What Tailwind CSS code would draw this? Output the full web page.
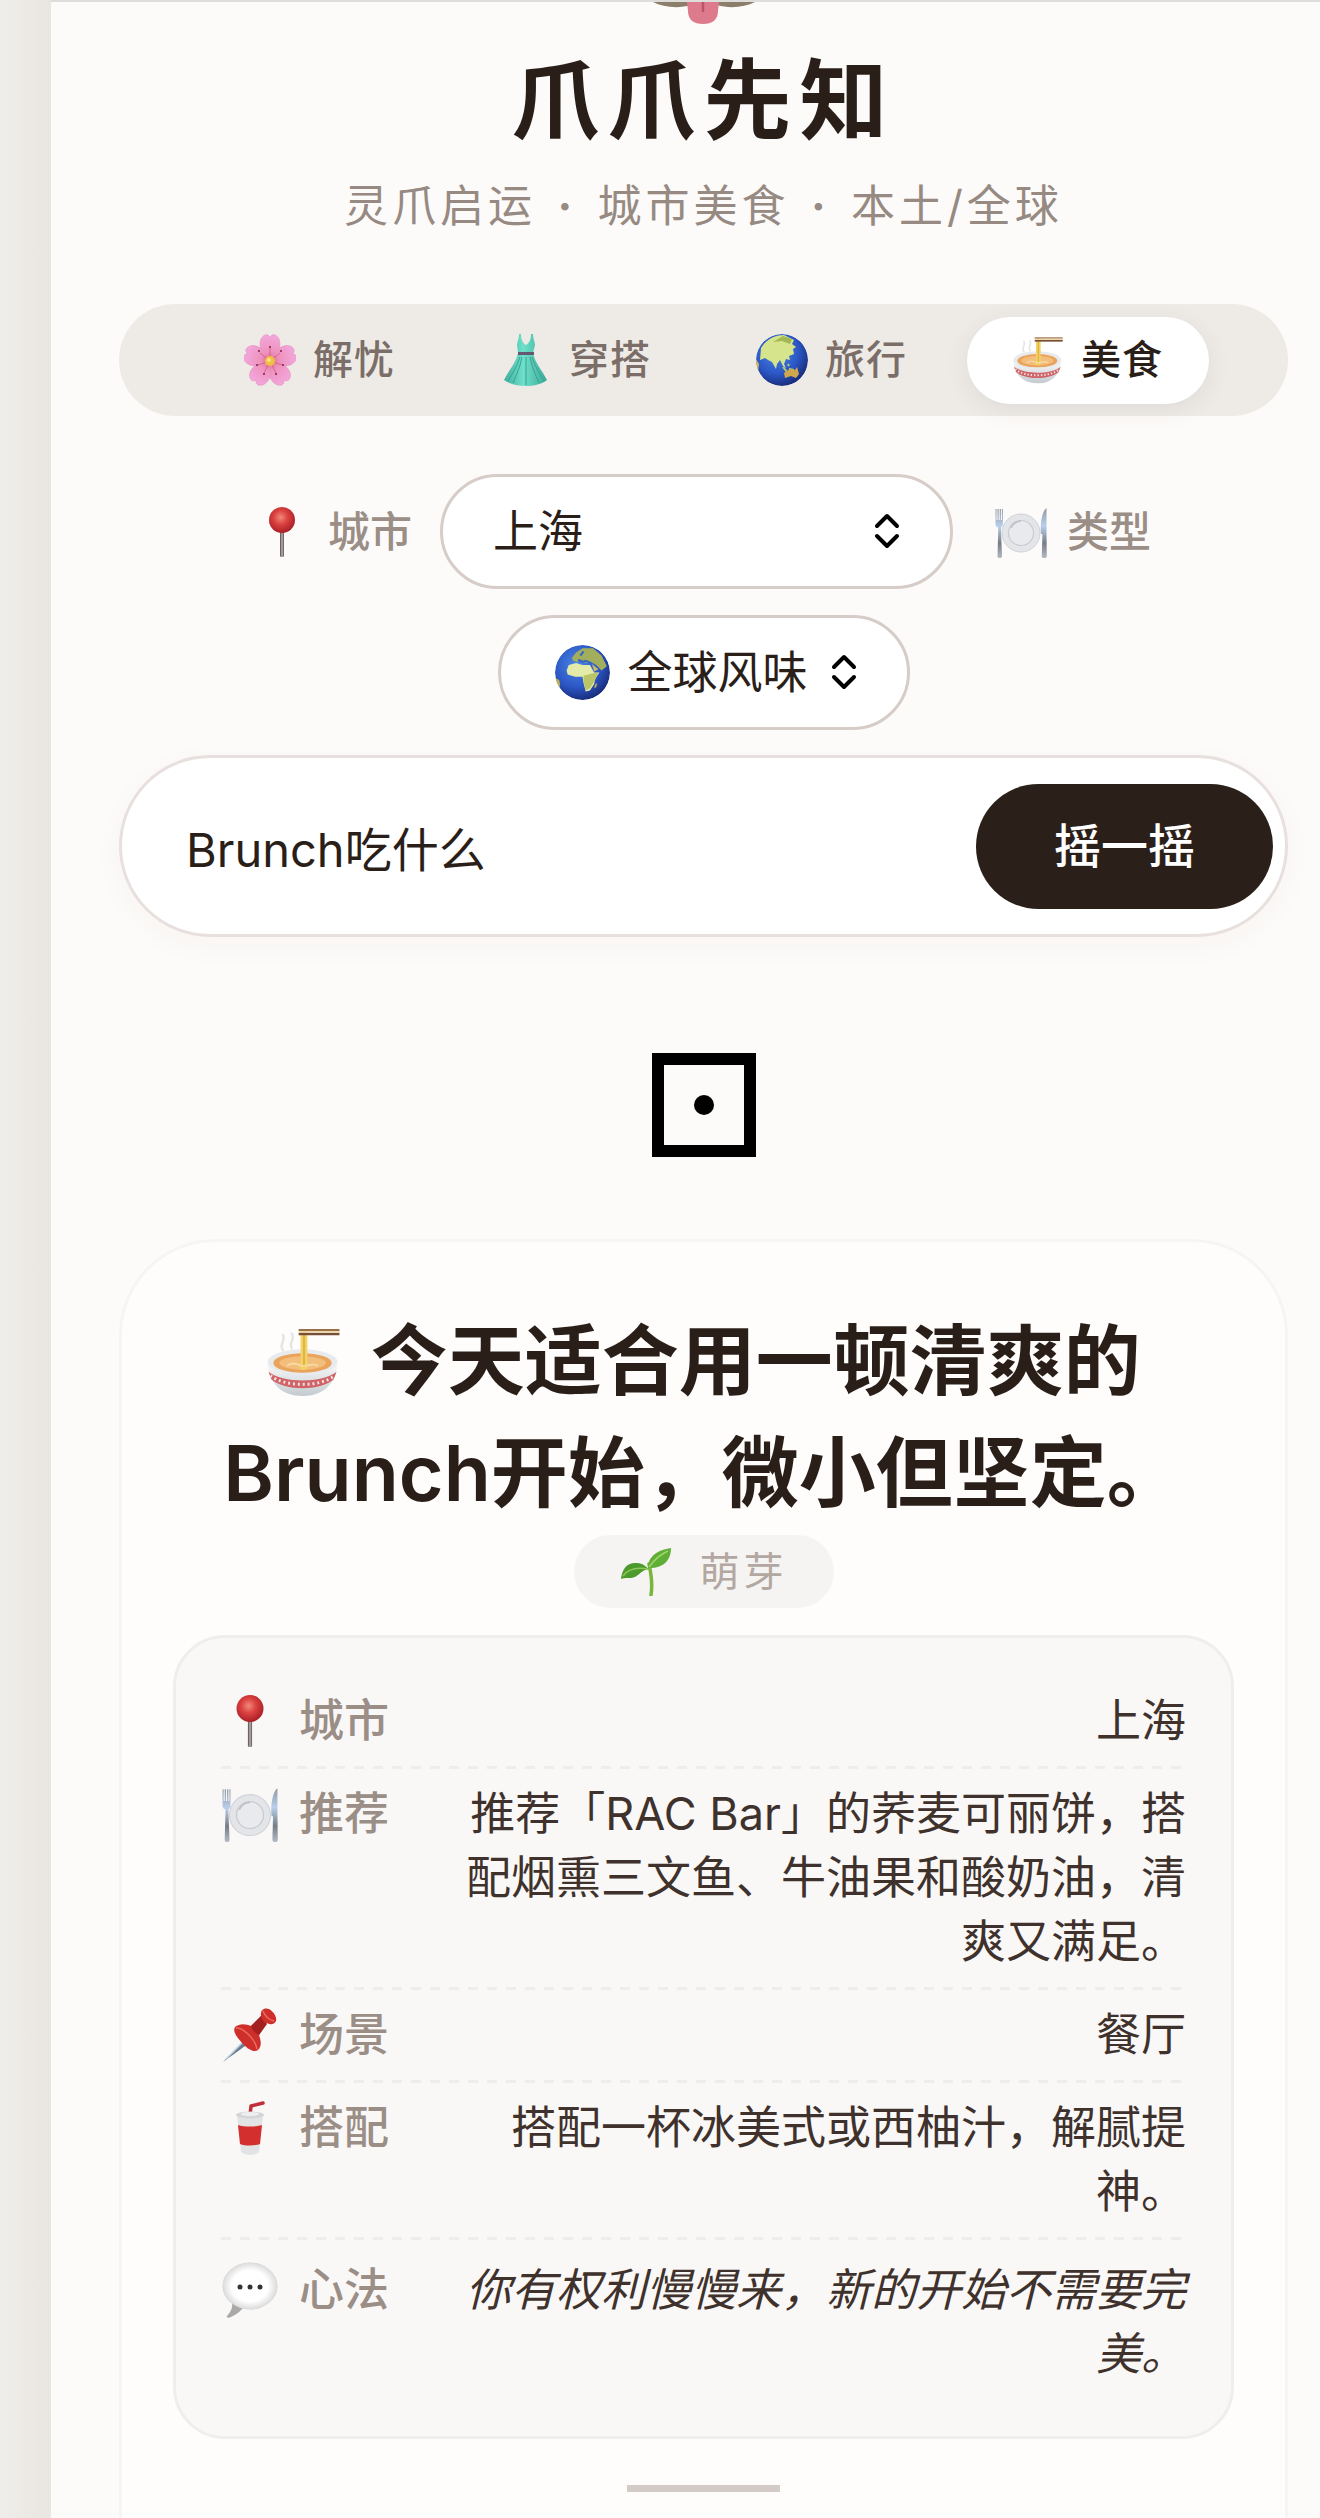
<!DOCTYPE html>
<html lang="zh-CN">

<head>
    <meta charset="UTF-8">
    <title>爪爪先知</title>
    <script src="https://cdn.jsdelivr.net/npm/@tailwindcss/browser@4"></script>
    <meta name="viewport" content="width=device-width, initial-scale=1.0">
</head>

<body class="min-h-screen bg-linear-to-r from-[#efedea] to-[#e9e6e1] to-[51px] pl-[51px] font-['Inter','Noto_Sans_CJK_SC',sans-serif] text-[#2a1e19]">
    <!-- Shared icons -->
    <svg class="absolute size-0" aria-hidden="true">
        <defs>
            <radialGradient id="redBall" cx=".45" cy=".4" r=".6">
                <stop offset="0" stop-color="#f08a7c" />
                <stop offset=".45" stop-color="#dd4240" />
                <stop offset="1" stop-color="#a81f27" />
            </radialGradient>
            <linearGradient id="steel" x1="0" x2="1">
                <stop offset="0" stop-color="#4d4544" />
                <stop offset=".5" stop-color="#bdb5b3" />
                <stop offset="1" stop-color="#5b5250" />
            </linearGradient>
            <linearGradient id="cutlery" x1="0" y1="0" x2="0" y2="1">
                <stop offset="0" stop-color="#8f979f" />
                <stop offset=".35" stop-color="#b9cfec" />
                <stop offset=".7" stop-color="#777d86" />
                <stop offset="1" stop-color="#b4bcc6" />
            </linearGradient>
            <radialGradient id="petal" gradientUnits="userSpaceOnUse" cx="26" cy="27" r="27">
                <stop offset="0" stop-color="#dd5f86" />
                <stop offset=".35" stop-color="#ee92bd" />
                <stop offset="1" stop-color="#f3a8de" />
            </radialGradient>
            <linearGradient id="dress" x1="0" x2="1">
                <stop offset="0" stop-color="#3fae9c" />
                <stop offset=".45" stop-color="#6fe0ca" />
                <stop offset="1" stop-color="#3aa896" />
            </linearGradient>
            <radialGradient id="sea" cx=".4" cy=".35" r=".65">
                <stop offset="0" stop-color="#4a86e6" />
                <stop offset=".65" stop-color="#2b56c4" />
                <stop offset="1" stop-color="#1b2f80" />
            </radialGradient>
            <linearGradient id="bowl" x1="0" y1="0" x2="0" y2="1">
                <stop offset="0" stop-color="#fafafa" />
                <stop offset="1" stop-color="#c3cbd0" />
            </linearGradient>
            <radialGradient id="bubble" cx=".5" cy=".5" r=".55">
                <stop offset=".6" stop-color="#ffffff" />
                <stop offset=".88" stop-color="#dedede" />
                <stop offset="1" stop-color="#a5a5a5" />
            </radialGradient>
            <clipPath id="globeClip">
                <circle cx="26" cy="26" r="26" />
            </clipPath>
        </defs>

        <symbol id="icon-pin" viewBox="0 0 52 52">
            <rect x="24" y="24" width="4" height="27" rx="1.5" fill="url(#steel)" />
            <circle cx="26" cy="14" r="13" fill="url(#redBall)" />
        </symbol>

        <symbol id="icon-plate" viewBox="0 0 52 52">
            <circle cx="26" cy="27" r="19" fill="#e3e5e9" stroke="#cfd2d8" stroke-width="1" />
            <circle cx="26" cy="27" r="12.5" fill="#e9eaed" stroke="#c9cbd1" stroke-width="1.2" />
            <path d="M16 22a12 12 0 0 1 10-7" fill="none" stroke="#bdbfc5" stroke-width="1.4" />
            <path d="M.5 3h1v11h1V3h1.200v11h1V3h1.200v11h1V3h1v15c0 2-1 3-2 3.500L7 50c0 3-4.500 3-4.500 0L3.300 21.500C1 21 .5 20 .5 18z" fill="url(#cutlery)" />
            <path d="M51.500 2v24l.3 24c0 3-5 3-5 0l.6-22H46c-1-10 1-23 5.500-26z" fill="url(#cutlery)" />
        </symbol>

        <symbol id="icon-noodles" viewBox="0 0 76 72">
            <path d="M17 24c-5-6 3-9 0-16M26 22c-4-6 4-9 0-15" fill="none" stroke="#e4e5e6" stroke-width="2.500" stroke-linecap="round" />
            <path d="M1 37c1 16 10 34 36 34s35-18 36-34z" fill="url(#bowl)" />
            <ellipse cx="37" cy="36" rx="36" ry="13" fill="#e8ebee" />
            <ellipse cx="37" cy="37" rx="30" ry="10" fill="#e9a35b" />
            <ellipse cx="37" cy="37" rx="24" ry="7" fill="#f3bd7c" />
            <path d="M35 3h7v34c3 3 0 7-4 7s-6-4-3-7z" fill="#f4d262" />
            <path d="M38.500 3v38" stroke="#d9a93c" stroke-width="1.500" />
            <path d="M21 40c5-5 12-1 16 0s11-4 16 0" fill="none" stroke="#f6d9a0" stroke-width="2" />
            <path d="M2 46c14 12 56 12 70 0l-3 8c-14 12-50 12-64 0z" fill="#cf6468" />
            <path d="M4 50c14 12 52 12 66 0" fill="none" stroke="#f6e2e2" stroke-width="3" stroke-dasharray="2 3" />
            <path d="M33 2h42v2H33z" fill="#9c7046" />
            <path d="M33 6h42v2.500H33z" fill="#7a4f38" />
            <path d="M33 4h42v2H33z" fill="#ead7ac" />
        </symbol>
    </svg>

    <main class="flex min-h-screen flex-col border-t-2 border-[#dfdddb] bg-[#fdfbf9] pr-8 pl-[68px]">
        <header class="flex flex-col items-center text-center">
            <svg class="h-[22px] w-[102px]" viewBox="0 0 102 22" aria-hidden="true">
                <path d="M0 0h102c-10 5-25 7-38 3H38C25 7 10 5 0 0z" fill="#8b7f6c" />
                <path d="M34 0h32l-1 9c0 9-6 13-15 13S35 18 35 9z" fill="#dd7a8c" />
                <path d="M50 0v9" stroke="#b95468" stroke-width="2.500" stroke-linecap="round" />
            </svg>
            <h1 class="mt-4 text-[88px] leading-[120px] font-bold tracking-[8px]">爪爪先知</h1>
            <p class="mt-[14px] text-[44px] leading-[64px] tracking-[4px] text-[#968a82]">灵爪启运 <span class="mx-[5px] font-bold">·</span> 城市美食 <span class="mx-[5px] font-bold">·</span> 本土/全球</p>
        </header>

        <nav class="mt-[66px] flex h-28 items-center justify-center gap-[14px] rounded-full bg-[#eeebe7] text-[40px] font-medium tracking-[1px] text-[#7b6e68]">
            <button class="flex h-[87px] w-[242px] items-center justify-center gap-[17px] rounded-full">
                <svg class="size-[52px]" viewBox="0 0 52 52" aria-hidden="true">
                    <g fill="url(#petal)" stroke="#e58fc0" stroke-width=".6">
                        <path id="petalShape" d="M26 27c-8-6-12-15-9-22 2-4 5-5 7-4l2 2 2-2c2-1 5 0 7 4 3 7-1 16-9 22z" />
                        <use href="#petalShape" transform="rotate(72 26 27)" />
                        <use href="#petalShape" transform="rotate(144 26 27)" />
                        <use href="#petalShape" transform="rotate(216 26 27)" />
                        <use href="#petalShape" transform="rotate(288 26 27)" />
                    </g>
                    <path d="M26 27V14M26 27l10-8M26 27l12 4M26 27l6 12M26 27l-6 12M26 27l-12 4M26 27l-10-8" stroke="#cf5a86" stroke-width=".8" />
                    <g fill="#7f2145">
                        <circle cx="26" cy="13" r="1" /><circle cx="37" cy="17" r="1" /><circle cx="39" cy="31" r="1" /><circle cx="32" cy="40" r="1" />
                        <circle cx="20" cy="40" r="1" /><circle cx="13" cy="31" r="1" /><circle cx="15" cy="17" r="1" />
                    </g>
                    <circle cx="26" cy="27" r="5" fill="#f0bf3f" />
                    <circle cx="25" cy="26" r="2" fill="#fbe58b" />
                </svg>
                解忧
            </button>
            <button class="flex h-[87px] w-[242px] items-center justify-center gap-[17px] rounded-full">
                <svg class="size-[52px]" viewBox="0 0 52 52" aria-hidden="true">
                    <path d="M19 0h2c0 6 2 9 5 11 3-2 5-5 5-11h2c0 5 2 8 2 11l-2 8c2 10 9 17 14 27-5 4-13 6-21 6S9 50 4 46c5-10 12-17 14-27l-1-8c0-3 2-6 2-11z" fill="url(#dress)" />
                    <path d="M22 23c-2 10-5 17-9 26M26 23v28M30 23c2 10 5 17 9 26M20 23C17 33 12 40 8 47M32 23c3 10 8 17 12 24" fill="none" stroke="#37a391" stroke-width="1" />
                    <path d="M18 18h16v3H18z" fill="#655674" />
                </svg>
                穿搭
            </button>
            <button class="flex h-[87px] w-[242px] items-center justify-center gap-[17px] rounded-full">
                <svg class="size-[52px]" viewBox="0 0 52 52" aria-hidden="true">
                    <g clip-path="url(#globeClip)">
                        <circle cx="26" cy="26" r="26" fill="url(#sea)" />
                        <path d="M5 14C10 6 18 1 28 1l10 5-2 4 4 3-3 2 1 5-5 2 1 4-4-1-2 5 2 4-3-2-3-6-3 4-1 5-4-7-4-2-3-2-5 2z" fill="#d6e48c" />
                        <path d="M27 2l9 3-2 5-8-3-9 1z" fill="#a4b852" />
                        <path d="M27 33l4 5M33 35l5 1M32 30l1 2" stroke="#bcc96a" stroke-width="2" />
                        <path d="M28 39l6-4 5 1 2-3 2 7-3 4-5-2-6 2z" fill="#cfa84e" />
                        <path d="M0 25l3 5-1 8-3 1z" fill="#d1b95e" />
                    </g>
                </svg>
                旅行
            </button>
            <button class="flex h-[87px] w-[242px] items-center justify-center gap-[17px] rounded-full bg-white text-[#2a1e19] shadow-[0_6px_24px_rgba(60,40,30,0.08)]" aria-current="page">
                <svg class="h-12 w-[52px]" aria-hidden="true"><use href="#icon-noodles" /></svg>
                美食
            </button>
        </nav>

        <form>
            <div class="mt-[58px] flex flex-wrap items-center justify-center gap-x-7 gap-y-[26px] text-[45px]">
                <label for="city" class="flex items-center gap-5 text-[42px] font-medium text-[#9a8e86]">
                    <svg class="size-[52px]" aria-hidden="true"><use href="#icon-pin" /></svg>
                    城市
                </label>
                <div class="relative">
                    <select id="city" class="h-[115px] w-[513px] appearance-none rounded-full border-[3px] border-[#d6ccc8] bg-white px-[50px]">
                        <option>上海</option>
                    </select>
                    <svg class="pointer-events-none absolute top-[39px] right-[53px] h-9 w-[26px]" viewBox="0 0 26 36" fill="none" stroke="#000" stroke-width="4" stroke-linecap="round" stroke-linejoin="round" aria-hidden="true">
                        <path d="M3 13l10-10 10 10M3 23l10 10 10-10" />
                    </svg>
                </div>
                <label for="kind" class="ml-[14px] flex items-center gap-5 text-[42px] font-medium text-[#9a8e86]">
                    <svg class="size-[52px]" aria-hidden="true"><use href="#icon-plate" /></svg>
                    类型
                </label>
                <div class="relative">
                    <select id="kind" class="h-[115px] w-[412px] appearance-none rounded-full border-[3px] border-[#d6ccc8] bg-white pl-[127px]">
                        <option>全球风味</option>
                    </select>
                    <svg class="pointer-events-none absolute top-[30px] left-[57px] size-[55px]" viewBox="0 0 52 52" aria-hidden="true">
                        <g clip-path="url(#globeClip)">
                            <circle cx="26" cy="26" r="26" fill="url(#sea)" />
                            <path d="M16 12l4-5 6-4 10 0 8 7 5 10-5 4-5-5-5-3-5 1-4-3-4 2-4-1z" fill="#a3ae5c" />
                            <path d="M13 19l7-2 6 2 7 0 4 7 5 0-4 6-1 5-4 6-4 1-2-8-1-6-7 0-7-2-1-4z" fill="#e4eba9" />
                            <path d="M27 29l8-2 6-1-3 7-5 8-4 2-2-8z" fill="#b9c566" />
                            <path d="M35 18l6 5-4 2z" fill="#cdb967" />
                            <path d="M22 14l4 2 3-1 5 2M27 6l-3 4" stroke="#3665c7" stroke-width="2" fill="none" />
                            <path d="M38 37l2-1-1 4-2 1zM0 31l4 2 1 5-3 4z" fill="#b9b058" />
                        </g>
                    </svg>
                    <svg class="pointer-events-none absolute top-[39px] right-[53px] h-9 w-[26px]" viewBox="0 0 26 36" fill="none" stroke="#000" stroke-width="4" stroke-linecap="round" stroke-linejoin="round" aria-hidden="true">
                        <path d="M3 13l10-10 10 10M3 23l10 10 10-10" />
                    </svg>
                </div>
            </div>

            <div class="mt-[25px] flex h-[182px] items-center rounded-full border-[3px] border-[#e8e0de] bg-white pr-3 pl-16 text-[47px] shadow-[0_8px_32px_rgba(60,40,30,0.03)]">
                <input type="text" aria-label="想问什么" value="Brunch吃什么" class="h-[120px] min-w-0 flex-1 outline-none">
                <button type="button" class="h-[125px] w-[297px] rounded-full bg-[#2b1f1a] font-medium text-white">摇一摇</button>
            </div>
        </form>

        <svg class="mt-[116px] size-[104px] self-center" viewBox="0 0 104 104" aria-hidden="true">
            <rect x="6" y="6" width="92" height="92" fill="none" stroke="#000" stroke-width="12" />
            <circle cx="52" cy="52" r="10" />
        </svg>

        <section class="mt-[82px] flex flex-1 flex-col items-center rounded-t-[96px] border-[3px] border-b-0 border-[#f7f5f4] bg-[#fefdfc] px-[51px] pt-[63px]">
            <h2 class="text-center text-[77px] leading-[112px] font-semibold">
                <svg class="mr-[10px] inline-block h-[70px] w-[75px] align-[-8px]" aria-hidden="true"><use href="#icon-noodles" /></svg>
                今天适合用一顿清爽的Brunch开始，微小但坚定。
            </h2>

            <span class="mt-[6px] flex h-[73px] items-center gap-7 rounded-full bg-[#f5f4f3] px-[46px] text-[40px] tracking-[4px] text-[#b3a8a1]">
                <svg class="h-12 w-[52px]" viewBox="0 0 52 48" aria-hidden="true">
                    <path d="M29 16c2 9 4 19 2 31" fill="none" stroke="#7ab53d" stroke-width="3.500" stroke-linecap="round" />
                    <path d="M28 20c0-12 10-18 23-20 0 12-7 20-21 20z" fill="#5fae35" />
                    <path d="M29 19C35 11 41 6 48 3" fill="none" stroke="#a2d56a" stroke-width="1.500" />
                    <path d="M1 31c1-10 6-17 16-16 6 0 9 4 12 6-7 1-9 5-14 8-5 2-10 0-14 2z" fill="#4c9a2c" />
                    <path d="M3 28c5-7 13-9 25-7" fill="none" stroke="#8cc657" stroke-width="1.500" />
                </svg>
                萌芽
            </span>

            <dl class="mt-[27px] w-full rounded-[52px] border-[3px] border-[#efeeec] bg-[#f9f8f7] px-[45px] pt-[38px] pb-[50px] text-[45px] leading-[64px] text-[#3f312c]">
                <div class="flex gap-14 py-[13px]">
                    <dt class="flex h-16 items-center gap-5 font-medium text-[#9a8e86]">
                        <svg class="h-[54px] w-[58px]" aria-hidden="true"><use href="#icon-pin" /></svg>
                        城市
                    </dt>
                    <dd class="flex-1 text-right">上海</dd>
                </div>
                <hr class="h-[3px] border-0 bg-[repeating-linear-gradient(90deg,#efedeb_0_10px,transparent_10px_19px)]">
                <div class="flex gap-14 py-[13px]">
                    <dt class="flex h-16 items-center gap-5 font-medium text-[#9a8e86]">
                        <svg class="h-14 w-[58px]" aria-hidden="true"><use href="#icon-plate" /></svg>
                        推荐
                    </dt>
                    <dd class="flex-1 text-right">推荐「RAC Bar」的荞麦可丽饼，搭配烟熏三文鱼、牛油果和酸奶油，清爽又满足。</dd>
                </div>
                <hr class="h-[3px] border-0 bg-[repeating-linear-gradient(90deg,#efedeb_0_10px,transparent_10px_19px)]">
                <div class="flex gap-14 py-[13px]">
                    <dt class="flex h-16 items-center gap-5 font-medium text-[#9a8e86]">
                        <svg class="h-[54px] w-[58px]" viewBox="0 0 54 54" aria-hidden="true">
                            <path d="M24 29L0 54l29-21z" fill="#6b7c90" />
                            <path d="M24 30L3 51" stroke="#c4d6e6" stroke-width="1.500" />
                            <path d="M12 19c5-4 11-3 16-1l10-10c-1-6 3-9 8-7 5 3 8 8 7 12-2 4-6 4-9 2l-8 12c2 6 3 11-1 15-4 3-10-1-15-6-5-6-11-12-8-17z" fill="#cf2f2b" />
                            <path d="M28 18l10-10c1 4 4 7 6 8l-8 11c-4-2-7-5-8-9z" fill="#a3201f" />
                            <path d="M13 20c6-1 19 10 21 21M40 3c2 5 6 9 11 10" fill="none" stroke="#ec6a60" stroke-width="1.500" />
                        </svg>
                        场景
                    </dt>
                    <dd class="flex-1 text-right">餐厅</dd>
                </div>
                <hr class="h-[3px] border-0 bg-[repeating-linear-gradient(90deg,#efedeb_0_10px,transparent_10px_19px)]">
                <div class="flex gap-14 py-[13px]">
                    <dt class="flex h-16 items-center gap-5 font-medium text-[#9a8e86]">
                        <svg class="h-[54px] w-[58px]" viewBox="0 0 54 54" aria-hidden="true">
                            <path d="M27 14l1-9 12-3" fill="none" stroke="#bf3038" stroke-width="3.500" stroke-linejoin="round" stroke-linecap="round" />
                            <path d="M14 15h26l-4 36c-4 4-14 4-18 0z" fill="#e2e3e4" />
                            <path d="M15 24c6 2 18 2 24 0l-2 19c-5 2-15 2-20 0z" fill="#d32f2f" />
                            <ellipse cx="27" cy="14" rx="14" ry="3.500" fill="#d4d5d6" />
                            <ellipse cx="27" cy="13" rx="9" ry="2" fill="#eeeeee" />
                        </svg>
                        搭配
                    </dt>
                    <dd class="flex-1 text-right">搭配一杯冰美式或西柚汁，解腻提神。</dd>
                </div>
                <hr class="h-[3px] border-0 bg-[repeating-linear-gradient(90deg,#efedeb_0_10px,transparent_10px_19px)]">
                <div class="flex gap-14 pt-[18px]">
                    <dt class="flex h-16 items-center gap-5 font-medium text-[#9a8e86]">
                        <svg class="h-14 w-[58px]" viewBox="0 0 56 56" aria-hidden="true">
                            <path d="M9 38c3 7 0 11-4 16-1 2 2 2 4 1 7-3 10-7 14-11z" fill="#a9a9a9" />
                            <ellipse cx="28" cy="24" rx="27.500" ry="23.500" fill="url(#bubble)" />
                            <circle cx="18" cy="25" r="2.500" fill="#333" />
                            <circle cx="28" cy="25" r="2.500" fill="#333" />
                            <circle cx="38" cy="25" r="2.500" fill="#333" />
                        </svg>
                        心法
                    </dt>
                    <dd class="flex-1 text-right italic">你有权利慢慢来，新的开始不需要完美。</dd>
                </div>
            </dl>

            <div class="mt-[46px] h-[7px] w-[153px] bg-[#d4cac6]"></div>
        </section>
    </main>
</body>

</html>
